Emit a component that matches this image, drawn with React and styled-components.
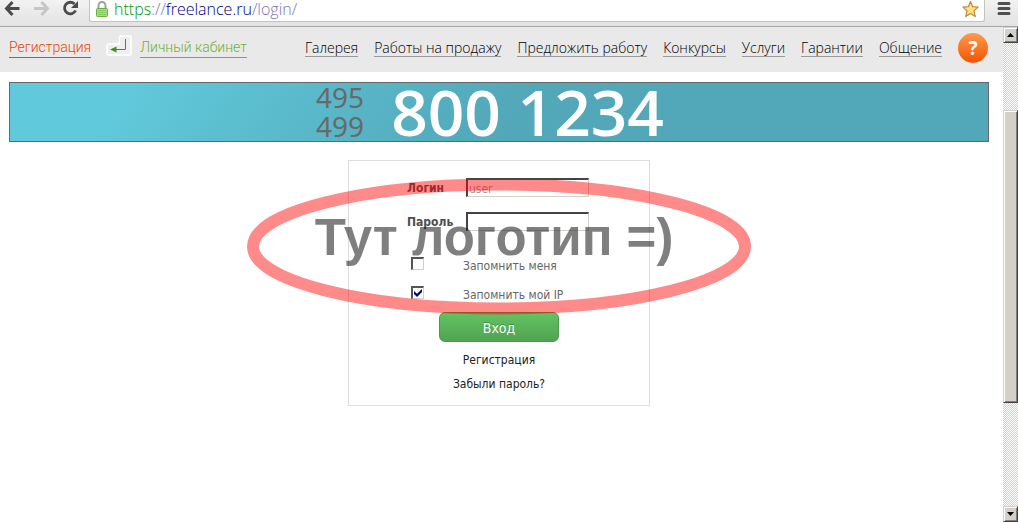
import React, { useState } from "react";
import styled, { createGlobalStyle } from "styled-components";

const GlobalStyle = createGlobalStyle`
  * {
    box-sizing: border-box;
  }

  body {
    margin: 0;
    background: #ffffff;
    font-family: "Noto Sans", "Open Sans", sans-serif;
  }

  button {
    font: inherit;
    padding: 0;
    border: none;
    background: none;
    cursor: pointer;
  }

  a {
    text-decoration: none;
  }
`;

const Shell = styled.div`
  display: flex;
  flex-direction: column;
  min-height: 100vh;
`;

const Toolbar = styled.div`
  display: flex;
  align-items: flex-start;
  height: 27px;
  padding-right: 7px;
  background: linear-gradient(#f2f2f2, #e2e2e2);
  border-bottom: 1px solid #a6a6a6;
`;

const ToolbarButtons = styled.div`
  display: flex;
  gap: 12px;
  width: 89px;
  padding-left: 4px;
`;

const ToolbarButton = styled.button`
  display: flex;
  width: 17px;
  height: 18px;
`;

const AddressBar = styled.div`
  display: flex;
  align-items: center;
  flex: 1;
  height: 22px;
  padding: 0 5px 3px 6px;
  background: #ffffff;
  border: 1px solid #c3c3c3;
  border-top: none;
  border-radius: 0 0 3px 3px;
`;

const Url = styled.div`
  flex: 1;
  padding-left: 6px;
  color: #7a75b5;
  font-family: "Open Sans", sans-serif;
  font-size: 16px;
  font-weight: 300;
  line-height: 18px;

  .scheme {
    color: #009900;
  }

  .host {
    color: #000080;
  }
`;

const MenuButton = styled(ToolbarButton)`
  width: 14px;
  margin-left: 12px;
`;

const Viewport = styled.div`
  display: flex;
  flex: 1;
`;

const Page = styled.div`
  flex: 1;
`;

const Header = styled.header`
  display: flex;
  align-items: flex-start;
  justify-content: space-between;
  height: 45px;
  padding: 6px 15px 0 9px;
  background: #e9e9e9;
`;

const Account = styled.div`
  display: flex;
  align-items: flex-start;

  svg {
    margin: 2px 8px 0 15px;
  }
`;

const AccountLink = styled.a`
  margin-top: 4px;
  color: ${({ color }) => color};
  border-bottom: 1px solid ${({ color }) => color};
  font-family: "Roboto", sans-serif;
  font-size: 14px;
  font-weight: 300;
  line-height: 20px;
  white-space: nowrap;
`;

const Nav = styled.nav`
  display: flex;
  align-items: flex-start;
  gap: 16px;
`;

const NavLink = styled.a`
  margin-top: 6px;
  color: #000000;
  border-bottom: 1px solid #999999;
  font-family: "Open Sans", sans-serif;
  font-size: 14px;
  font-weight: 300;
  line-height: 17px;
  white-space: nowrap;
`;

const HelpButton = styled.button`
  width: 30px;
  height: 30px;
  border-radius: 50%;
  background: linear-gradient(#ff9a4d, #f25400);
  color: #ffffff;
  font-size: 19px;
  font-weight: 700;
  line-height: 30px;
`;

const Main = styled.main`
  display: flex;
  flex-direction: column;
  align-items: center;
  gap: 18px;
  padding: 10px 14px 0 9px;
`;

const Banner = styled.div`
  display: flex;
  align-items: center;
  justify-content: center;
  gap: 27px;
  width: 100%;
  height: 60px;
  padding-right: 18px;
  border: 1px solid #666666;
  background: linear-gradient(125deg, #60c9db 12%, #52a7b8 52%);
`;

const Codes = styled.div`
  display: flex;
  flex-direction: column;
  color: #696969;
  font-size: 28px;
  line-height: 29px;
`;

const Phone = styled.div`
  color: #ffffff;
  font-family: "Open Sans", sans-serif;
  font-size: 64px;
  font-weight: 600;
  line-height: 58px;
`;

const Card = styled.form`
  position: relative;
  display: flex;
  flex-direction: column;
  align-items: center;
  width: 302px;
  padding: 17px 0 13px;
  border: 1px solid #dddddd;
  font-family: "DejaVu Sans Condensed", "Noto Sans", sans-serif;
  font-size: 12px;
`;

const Fields = styled.div`
  display: grid;
  gap: 15px;
  width: 184px;
`;

const Field = styled.label`
  display: grid;
  grid-template-columns: 59px 1fr;
  height: 19px;
  color: #4d4d4d;
  font-weight: 700;
  line-height: 21px;
`;

const TextInput = styled.input`
  width: 123px;
  height: 19px;
  padding: 1px 1px 0;
  border: 2px solid;
  border-color: #444444 #d4d0c8 #d4d0c8 #444444;
  border-right-width: 1px;
  border-bottom-width: 1px;
  background: transparent;
  color: #999999;
  font-family: inherit;
  font-size: 12px;
  outline: none;
`;

const Checks = styled.div`
  display: grid;
  gap: 11px;
  width: 176px;
  margin-top: 26px;
`;

const Check = styled.label`
  display: grid;
  grid-template-columns: 52px 1fr;
  align-items: start;
  color: #666666;
  line-height: 18px;
`;

const CheckInput = styled.input`
  appearance: none;
  display: grid;
  width: 13px;
  height: 13px;
  margin: 0;
  border: 2px solid;
  border-color: #555555 #d4d0c8 #d4d0c8 #555555;
  border-right-width: 1px;
  border-bottom-width: 1px;
  background: #ffffff;

  &:checked::before {
    content: "";
    width: 8px;
    height: 8px;
    margin: 1px;
    background: #000080;
    clip-path: polygon(0 25%, 38% 60%, 100% 0, 100% 38%, 38% 100%, 0 62%);
  }
`;

const SubmitButton = styled.button`
  width: 120px;
  height: 30px;
  margin-top: 8px;
  border: 1px solid #4a9a4a;
  border-radius: 6px;
  background: linear-gradient(#62c462, #51a351);
  color: #ffffff;
  font-size: 14px;
  line-height: 30px;
  text-shadow: 0 -1px 0 rgba(0, 0, 0, 0.25);
`;

const CardLink = styled.a`
  margin-top: 8px;
  color: #222222;
  line-height: 16px;

  ${SubmitButton} + & {
    margin-top: 10px;
  }
`;

const Logo = styled.div`
  position: absolute;
  top: 18px;
  left: 50%;
  display: grid;
  place-items: center;
  transform: translateX(-50%);
  pointer-events: none;

  svg,
  span {
    grid-area: 1 / 1;
  }

  svg {
    display: block;
  }

  span {
    padding-right: 10px;
    padding-bottom: 18px;
    color: rgba(0, 0, 0, 0.5);
    font-family: "Liberation Sans", sans-serif;
    font-size: 51px;
    font-weight: 700;
    line-height: 60px;
    white-space: nowrap;
  }
`;

const Scrollbar = styled.div`
  display: flex;
  flex-direction: column;
  width: 15px;
  background: repeating-conic-gradient(#d4d0c8 0 25%, #ffffff 0 50%) 0 0 / 2px 2px;
`;

const ScrollPiece = styled.button`
  display: flex;
  align-items: center;
  justify-content: center;
  flex: ${({ $grow }) => ($grow ? `${$grow} 1 0` : "0 0 16px")};
  border: 1px solid;
  border-color: #d4d0c8 #404040 #404040 #d4d0c8;
  box-shadow: inset 1px 1px #ffffff, inset -1px -1px #808080;
  background: #d4d0c8;
`;

const ScrollGap = styled.div`
  flex: ${({ $grow }) => $grow} 1 0;
`;

const NAV_ITEMS = [
  "Галерея",
  "Работы на продажу",
  "Предложить работу",
  "Конкурсы",
  "Услуги",
  "Гарантии",
  "Общение",
];

const BackIcon = () => (
  <svg width="17" height="18" viewBox="0 0 17 18" fill="none" stroke="#4b4b4b" strokeWidth="3">
    <path d="M2.5 8.5H15.5M8.5 2L2.5 8.5L8.5 15" />
  </svg>
);

const ForwardIcon = () => (
  <svg width="17" height="18" viewBox="0 0 17 18" fill="none" stroke="#c6c6c6" strokeWidth="3">
    <path d="M1 8.5H14M8.5 2L14.5 8.5L8.5 15" />
  </svg>
);

const ReloadIcon = () => (
  <svg width="17" height="18" viewBox="0 0 17 18" fill="none">
    <path d="M12.5 4A5.8 5.8 0 1 0 13.6 10.5" stroke="#4b4b4b" strokeWidth="2.8" />
    <path d="M16 1V8H9Z" fill="#4b4b4b" />
  </svg>
);

const LockIcon = () => (
  <svg width="12" height="17" viewBox="0 0 12 17">
    <path d="M2.5 8V4.5a3.5 3.5 0 0 1 7 0V8" fill="none" stroke="#a0a0a0" strokeWidth="2" />
    <rect x="0.5" y="7.5" width="11" height="8" rx="1" fill="#a5e080" stroke="#6aae48" />
    <path d="M2 9.5h8M2 11.5h8M2 13.5h8" stroke="#86cc60" />
  </svg>
);

const StarIcon = () => (
  <svg width="18" height="18" viewBox="0 0 18 18">
    <path
      d="M9 1L11.3 6.5L17 7L12.7 11L14 17L9 13.8L4 17L5.3 11L1 7L6.7 6.5Z"
      fill="#fde283"
      stroke="#c08a3e"
      strokeWidth="1.3"
      strokeLinejoin="round"
    />
  </svg>
);

const MenuIcon = () => (
  <svg width="14" height="18" viewBox="0 0 14 18">
    <path d="M2 3.5H12M2 8.5H12M2 13.5H12" stroke="#505050" strokeWidth="3" strokeLinecap="round" />
  </svg>
);

const EnterIcon = () => (
  <svg width="26" height="21" viewBox="0 0 26 21">
    <path
      d="M15 1H23.5Q25 1 25 2.5V18.5Q25 20 23.5 20H2.5Q1 20 1 18.5V10.5Q1 9 2.5 9H12Q13.5 9 13.5 7.5V2.5Q13.5 1 15 1Z"
      fill="#eeeeee"
      stroke="#ffffff"
      strokeWidth="1.5"
    />
    <path d="M19.5 4V14.5H8" fill="none" stroke="#449022" />
    <path d="M4 14.5L10.5 11.5V17.5Z" fill="#449022" />
  </svg>
);

const LoginForm = () => {
  const [login, setLogin] = useState("user");
  const [password, setPassword] = useState("");

  return (
    <Card onSubmit={(e) => e.preventDefault()}>
      <Fields>
        <Field>
          Логин
          <TextInput value={login} onChange={(e) => setLogin(e.target.value)} />
        </Field>
        <Field>
          Пароль
          <TextInput
            type="password"
            value={password}
            onChange={(e) => setPassword(e.target.value)}
          />
        </Field>
      </Fields>
      <Checks>
        <Check>
          <CheckInput type="checkbox" />
          Запомнить меня
        </Check>
        <Check>
          <CheckInput type="checkbox" defaultChecked />
          Запомнить мой IP
        </Check>
      </Checks>
      <SubmitButton type="submit">Вход</SubmitButton>
      <CardLink href="#register">Регистрация</CardLink>
      <CardLink href="#forgot">Забыли пароль?</CardLink>
      <Logo>
        <svg width="504" height="136" viewBox="0 0 504 136">
          <ellipse
            cx="252"
            cy="67.5"
            rx="246"
            ry="62"
            fill="none"
            stroke="#ff0000"
            strokeOpacity="0.46"
            strokeWidth="12"
          />
        </svg>
        <span>Тут логотип =)</span>
      </Logo>
    </Card>
  );
};

const App = () => {
  return (
    <Shell>
      <GlobalStyle />
      <Toolbar>
        <ToolbarButtons>
          <ToolbarButton aria-label="Назад">
            <BackIcon />
          </ToolbarButton>
          <ToolbarButton aria-label="Вперёд">
            <ForwardIcon />
          </ToolbarButton>
          <ToolbarButton aria-label="Обновить">
            <ReloadIcon />
          </ToolbarButton>
        </ToolbarButtons>
        <AddressBar>
          <LockIcon />
          <Url>
            <span className="scheme">https</span>://
            <span className="host">freelance.ru</span>/login/
          </Url>
          <ToolbarButton aria-label="Закладка">
            <StarIcon />
          </ToolbarButton>
        </AddressBar>
        <MenuButton aria-label="Меню">
          <MenuIcon />
        </MenuButton>
      </Toolbar>
      <Viewport>
        <Page>
          <Header>
            <Account>
              <AccountLink href="#register" color="#ee4400">
                Регистрация
              </AccountLink>
              <EnterIcon />
              <AccountLink href="#account" color="#6fb13b">
                Личный кабинет
              </AccountLink>
            </Account>
            <Nav>
              {NAV_ITEMS.map((item) => (
                <NavLink key={item} href="#">
                  {item}
                </NavLink>
              ))}
              <HelpButton>?</HelpButton>
            </Nav>
          </Header>
          <Main>
            <Banner>
              <Codes>
                <span>495</span>
                <span>499</span>
              </Codes>
              <Phone>800 1234</Phone>
            </Banner>
            <LoginForm />
          </Main>
        </Page>
        <Scrollbar>
          <ScrollPiece aria-label="Вверх">
            <svg width="7" height="4">
              <path d="M0 4L3.5 0L7 4Z" />
            </svg>
          </ScrollPiece>
          <ScrollGap $grow={67} />
          <ScrollPiece $grow={293} aria-label="Прокрутка" />
          <ScrollGap $grow={103} />
          <ScrollPiece aria-label="Вниз">
            <svg width="7" height="4">
              <path d="M0 0L3.5 4L7 0Z" />
            </svg>
          </ScrollPiece>
        </Scrollbar>
      </Viewport>
    </Shell>
  );
};

export default App;
